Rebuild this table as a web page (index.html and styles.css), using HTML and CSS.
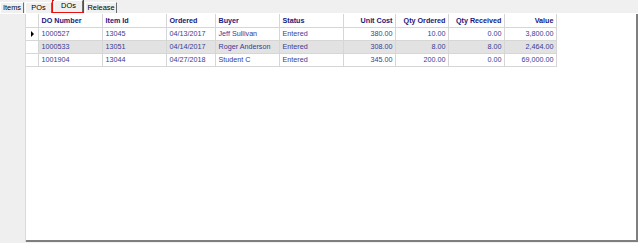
FILE: index.html
```html
<!DOCTYPE html>
<html>
<head>
<meta charset="utf-8">
<link rel="stylesheet" href="styles.css">
</head>
<body>
<div class="app">
  <div class="tabstrip">
    <div class="tab tab-items">Items</div>
    <div class="tab tab-pos">POs</div>
    <div class="tab-mark"><div class="tab active">DOs</div></div>
    <div class="tab tab-release">Release</div>
  </div>
  <div class="body">
    <div class="side"></div>
    <div class="panel">
      <table class="grid">
        <colgroup>
          <col class="c-rh"><col class="c-do"><col class="c-item"><col class="c-ord"><col class="c-buyer"><col class="c-status"><col class="c-cost"><col class="c-qo"><col class="c-qr"><col class="c-val">
        </colgroup>
        <thead>
          <tr>
            <th class="rh"></th>
            <th>DO Number</th>
            <th>Item Id</th>
            <th>Ordered</th>
            <th>Buyer</th>
            <th>Status</th>
            <th class="num">Unit Cost</th>
            <th class="num">Qty Ordered</th>
            <th class="num">Qty Received</th>
            <th class="num">Value</th>
          </tr>
        </thead>
        <tbody>
          <tr>
            <td class="rh"><span class="arrow"></span></td>
            <td>1000527</td><td>13045</td><td>04/13/2017</td><td>Jeff Sullivan</td><td>Entered</td>
            <td class="num">380.00</td><td class="num">10.00</td><td class="num">0.00</td><td class="num">3,800.00</td>
          </tr>
          <tr class="alt">
            <td class="rh"></td>
            <td>1000533</td><td>13051</td><td>04/14/2017</td><td>Roger Anderson</td><td>Entered</td>
            <td class="num">308.00</td><td class="num">8.00</td><td class="num">8.00</td><td class="num">2,464.00</td>
          </tr>
          <tr>
            <td class="rh"></td>
            <td>1001904</td><td>13044</td><td>04/27/2018</td><td>Student C</td><td>Entered</td>
            <td class="num">345.00</td><td class="num">200.00</td><td class="num">0.00</td><td class="num">69,000.00</td>
          </tr>
        </tbody>
      </table>
    </div>
  </div>
</div>
</body>
</html>
```
FILE: styles.css
```css
* { box-sizing: border-box; }
html, body { margin: 0; padding: 0; }
body {
  width: 638px;
  height: 243px;
  background: #f0f0f0;
  font-family: "Liberation Sans", Arial, sans-serif;
  overflow: hidden;
}
.app {
  width: 638px;
  height: 243px;
  display: flex;
  flex-direction: column;
}
.tabstrip {
  height: 14px;
  display: flex;
  align-items: flex-end;
  border-bottom: 1px solid #ffffff;
}
.tab {
  height: 11px;
  font-size: 7.4px;
  line-height: 10px;
  color: #000;
  background: #f0f0f0;
  border-left: 1px solid #ffffff;
  border-top: 1px solid #ffffff;
  border-right: 1px solid #6d6d6d;
  display: flex;
  justify-content: center;
}
.tab-items { width: 24px; }
.tab-pos { width: 27px; margin-left: 1px; }
.tab-release { width: 32px; margin-left: 1px; }
.tab-mark {
  border: 1px solid #e81010;
  height: 13px;
  width: 32px;
  margin-left: 0;
  padding: 1px 0 0 1px;
  display: flex;
  align-items: flex-end;
}
.tab.active {
  width: 29px;
  height: 12px;
}
.body {
  flex: 1;
  display: flex;
  min-height: 0;
}
.side {
  width: 26px;
  background: #efefef;
  border-right: 1px solid #dadada;
  margin-bottom: 1px;
}
.panel {
  flex: 1;
  background: #ffffff;
  border-right: 2px solid #7f7f7f;
  border-bottom: 2px solid #7f7f7f;
  margin-bottom: 1px;
}
.grid {
  border-collapse: collapse;
  table-layout: fixed;
  width: 530px;
  font-size: 7.2px;
}
.c-rh { width: 12px; }
.c-do { width: 64px; }
.c-item { width: 64px; }
.c-ord { width: 49px; }
.c-buyer { width: 64px; }
.c-status { width: 64px; }
.c-cost { width: 52px; }
.c-qo { width: 53px; }
.c-qr { width: 56px; }
.c-val { width: 52px; }
.grid th, .grid td {
  height: 13px;
  padding: 0 2px 0 3px;
  border: 1px solid #d6d6d6;
  white-space: nowrap;
  overflow: hidden;
  text-align: left;
  line-height: 11px;
}
.grid th {
  font-weight: bold;
  color: #18187e;
  background: #ffffff;
  border-top: none;
}
.grid td { color: #3a3a94; }
.grid th:first-child, .grid td:first-child { border-left: none; }
.grid .num { text-align: right; padding: 0 2px 0 2px; }
.grid tr.alt td { background: #e2e2e2; }
.grid tr.alt td.rh { background: #ffffff; }
.grid .rh { padding: 0; }
.arrow {
  display: block;
  width: 0;
  height: 0;
  margin-left: 5px;
  border-top: 3px solid transparent;
  border-bottom: 3px solid transparent;
  border-left: 3px solid #000;
}
```
